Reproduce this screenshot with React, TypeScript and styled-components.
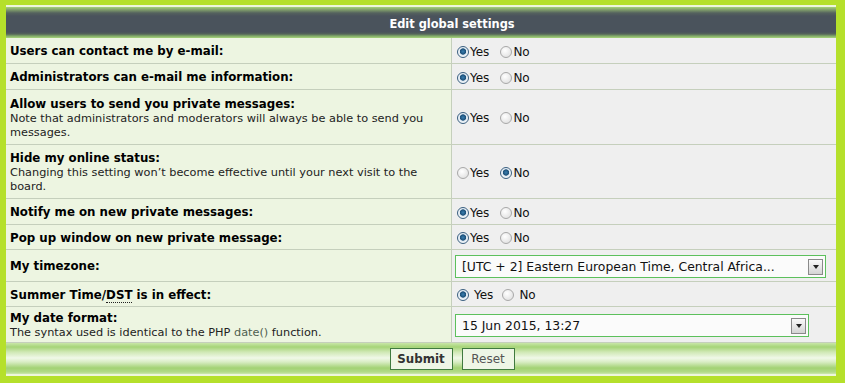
import React from "react";
import styled, { createGlobalStyle } from "styled-components";

const Global = createGlobalStyle`
  html, body { margin: 0; padding: 0; background: #b5e02b; }
  body { font-family: "DejaVu Sans", Verdana, sans-serif; }
`;

const Frame = styled.div`
  width: 845px;
  height: 383px;
  box-sizing: border-box;
  background: #b5e02b;
  padding: 5px 9px 7px 6px;
`;

const Panel = styled.div`
  border-top: 2px solid #eef6dc;
  border-bottom: 2px solid #eef6dc;
  background: #eef5e0;
  display: flex;
  flex-direction: column;
`;

const Header = styled.div`
  height: 31px;
  box-sizing: border-box;
  padding: 3px 0 0 62px;
  background: linear-gradient(
    to bottom,
    #a6d27a 0px,
    #7d9a6a 3px,
    #55625e 6px,
    #4a535c 9px,
    #4a535c 25px,
    #55645a 27px,
    #80a868 29px,
    #a8d47c 31px
  );
  color: #fff;
  font-weight: bold;
  font-size: 11.4px;
  display: flex;
  align-items: center;
  justify-content: center;
`;

const Grid = styled.div`
  display: grid;
  grid-template-columns: 446px 1fr;
`;

const Label = styled.div<{ $h: number }>`
  height: ${(p) => p.$h}px;
  box-sizing: border-box;
  background: #edf5e1;
  border-bottom: 1px solid #c5cfbc;
  border-right: 1px solid #c5cfbc;
  padding: 2px 4px 0;
  display: flex;
  flex-direction: column;
  justify-content: center;
`;

const Value = styled.div<{ $h: number }>`
  height: ${(p) => p.$h}px;
  box-sizing: border-box;
  background: #efefef;
  border-bottom: 1px solid #c5cfbc;
  padding: 2px 4px 0 3px;
  display: flex;
  align-items: center;
`;

const Title = styled.div`
  font-weight: bold;
  font-size: 11.8px;
  color: #000;
  line-height: 15px;
`;

const Explain = styled.div`
  font-size: 11.3px;
  color: #222;
  line-height: 14px;
`;

const Abbr = styled.span`
  border-bottom: 1px dotted #222;
`;

const Link = styled.span`
  color: #4f5f4f;
`;

const RadioGroup = styled.div<{ $gap: number }>`
  display: flex;
  align-items: center;
  gap: ${(p) => p.$gap}px;
  padding-left: 2px;
  font-size: 12px;
  color: #111;
`;

const RadioLabel = styled.label<{ $inner: number }>`
  display: flex;
  align-items: center;
  gap: ${(p) => p.$inner}px;
`;

const Dot = styled.span<{ $on: boolean }>`
  width: 12px;
  height: 12px;
  box-sizing: border-box;
  border-radius: 50%;
  border: 1px solid ${(p) => (p.$on ? "#3a5f80" : "#a8a8a8")};
  background: ${(p) =>
    p.$on
      ? "radial-gradient(circle at 50% 45%, #3a7fb0 0, #1c4f78 2.8px, #dfe9f2 3.5px, #f6f9fb 5.5px)"
      : "radial-gradient(circle at 40% 35%, #ffffff 0, #e6e6e6 6px)"};
`;

const Select = styled.div<{ $w: number }>`
  width: ${(p) => p.$w}px;
  height: 23px;
  box-sizing: border-box;
  border: 1px solid #5cc05c;
  background: #fbfbfb;
  display: flex;
  align-items: center;
  justify-content: space-between;
  padding: 0 2px 0 6px;
  font-size: 12.4px;
  color: #111;
`;

const Arrow = styled.span`
  width: 15px;
  height: 16px;
  box-sizing: border-box;
  border: 1px solid #8a8a8a;
  background: linear-gradient(#fafafa, #d4d4d4);
  display: flex;
  align-items: center;
  justify-content: center;
  &::after {
    content: "";
    border-left: 3px solid transparent;
    border-right: 3px solid transparent;
    border-top: 4px solid #222;
  }
`;

const Footer = styled.div`
  height: 31px;
  box-sizing: border-box;
  background: linear-gradient(
    to bottom,
    #c9e6a8 0px,
    #a6d478 4px,
    #cfe8b4 9px,
    #f0f8e8 15px,
    #d8edc4 19px,
    #a2d274 25px,
    #b2da88 29px,
    #cde8b0 31px
  );
  display: flex;
  align-items: center;
  justify-content: center;
  gap: 9px;
  padding-left: 62px;
`;

const Button = styled.button<{ $primary?: boolean; $w: number }>`
  width: ${(p) => p.$w}px;
  height: 22px;
  box-sizing: border-box;
  border: 1px solid #3f7a3f;
  background: #eef6e6;
  padding: 0;
  font-family: "DejaVu Sans", Verdana, sans-serif;
  font-size: ${(p) => (p.$primary ? "11.8px" : "12px")};
  font-weight: ${(p) => (p.$primary ? "bold" : "normal")};
  color: ${(p) => (p.$primary ? "#333" : "#555")};
`;

type Row = {
  title: React.ReactNode;
  explain?: React.ReactNode;
  h: number;
  kind: "radio" | "tz" | "date";
  yes?: boolean;
  spaced?: boolean;
};

const rows: Row[] = [
  { title: "Users can contact me by e-mail:", h: 26, kind: "radio", yes: true },
  { title: "Administrators can e-mail me information:", h: 26, kind: "radio", yes: true },
  {
    title: "Allow users to send you private messages:",
    explain: "Note that administrators and moderators will always be able to send you messages.",
    h: 55,
    kind: "radio",
    yes: true,
  },
  {
    title: "Hide my online status:",
    explain: "Changing this setting won\u2019t become effective until your next visit to the board.",
    h: 54,
    kind: "radio",
    yes: false,
  },
  { title: "Notify me on new private messages:", h: 26, kind: "radio", yes: true },
  { title: "Pop up window on new private message:", h: 25, kind: "radio", yes: true },
  { title: "My timezone:", h: 32, kind: "tz" },
  {
    title: (
      <>
        Summer Time/<Abbr>DST</Abbr> is in effect:
      </>
    ),
    h: 25,
    kind: "radio",
    yes: true,
    spaced: true,
  },
  {
    title: "My date format:",
    explain: (
      <>
        The syntax used is identical to the PHP <Link>date()</Link> function.
      </>
    ),
    h: 36,
    kind: "date",
  },
];

function Radios({ yes, spaced }: { yes: boolean; spaced?: boolean }) {
  return (
    <RadioGroup $gap={spaced ? 9 : 11}>
      <RadioLabel $inner={spaced ? 5 : 1}>
        <Dot $on={yes} />
        Yes
      </RadioLabel>
      <RadioLabel $inner={spaced ? 5 : 1}>
        <Dot $on={!yes} />
        No
      </RadioLabel>
    </RadioGroup>
  );
}

export default function App() {
  return (
    <>
      <Global />
      <Frame>
        <Panel>
          <Header>Edit global settings</Header>
          <Grid>
            {rows.map((r, i) => (
              <React.Fragment key={i}>
                <Label $h={r.h}>
                  <Title>{r.title}</Title>
                  {r.explain && <Explain>{r.explain}</Explain>}
                </Label>
                <Value $h={r.h}>
                  {r.kind === "radio" && <Radios yes={!!r.yes} spaced={r.spaced} />}
                  {r.kind === "tz" && (
                    <Select $w={371}>
                      [UTC + 2] Eastern European Time, Central Africa...
                      <Arrow />
                    </Select>
                  )}
                  {r.kind === "date" && (
                    <Select $w={354}>
                      15 Jun 2015, 13:27
                      <Arrow />
                    </Select>
                  )}
                </Value>
              </React.Fragment>
            ))}
          </Grid>
          <Footer>
            <Button $primary $w={63}>Submit</Button>
            <Button $w={53}>Reset</Button>
          </Footer>
        </Panel>
      </Frame>
    </>
  );
}
